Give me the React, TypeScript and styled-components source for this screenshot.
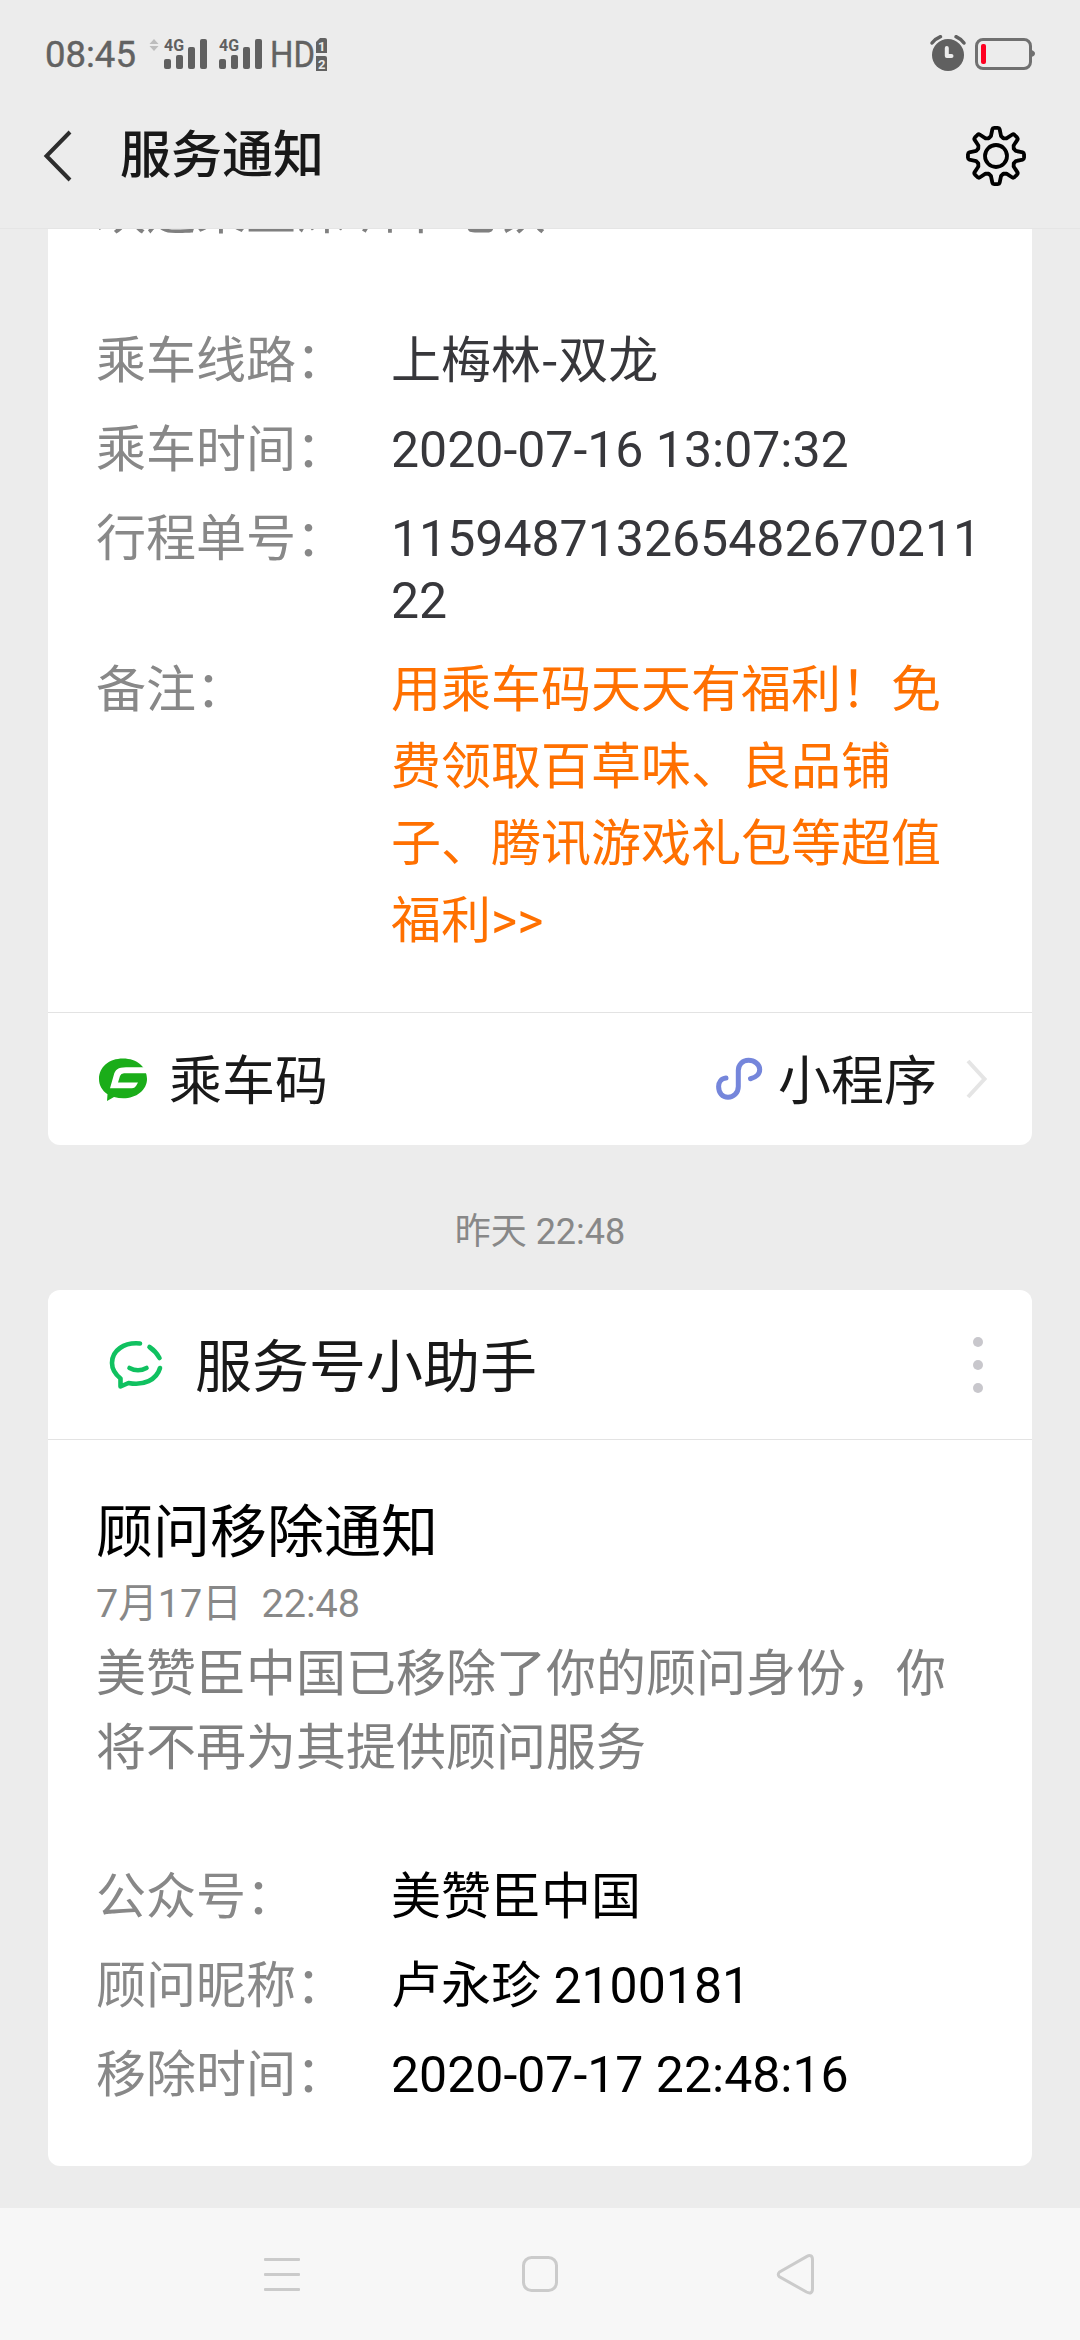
import React from 'react';
import styled, { createGlobalStyle } from 'styled-components';

const Global = createGlobalStyle`
  * { box-sizing: border-box; }
  body {
    margin: 0;
    background: #ececec;
    font-family: Roboto, 'Noto Sans CJK SC', sans-serif;
  }
  svg { display: block; flex: none; overflow: visible; }
`;

const Screen = styled.div`
  width: 1080px;
  height: 2340px;
  display: flex;
  flex-direction: column;
  overflow: hidden;
  background: #ececec;
`;

const Header = styled.header`
  flex: none;
  height: 229px;
  border-bottom: 1px solid #e5e5e5;
`;

const StatusBar = styled.div`
  display: flex;
  justify-content: space-between;
  height: 108px;
  padding: 0 45px;
`;

const StatusGroup = styled.div`
  display: flex;
  align-items: flex-start;
`;

const Clock = styled.span`
  margin-top: 34px;
  width: 103px;
  font-size: 36.5px;
  line-height: 42px;
  -webkit-text-stroke: 0.4px #626262;
  color: #626262;
`;

const StatusIcon = styled.span<{ $gap: number }>`
  display: flex;
  height: 42px;
  margin: 32px 0 0 ${(p) => p.$gap}px;
`;

const TitleBar = styled.div`
  display: flex;
  align-items: center;
  height: 96px;
  padding: 0 53px 0 43px;
`;

const Title = styled.h1`
  flex: 1;
  margin: 0 0 0 47px;
  font-size: 51px;
  line-height: 76px;
  font-weight: 500;
  color: #181818;
`;

const Feed = styled.main`
  flex: 1;
  min-height: 0;
  display: flex;
  flex-direction: column;
  justify-content: flex-end;
  overflow: hidden;
  padding: 0 48px 42px;
`;

const Card = styled.section<{ $cut?: boolean }>`
  flex: none;
  background: #fff;
  border-radius: ${(p) => (p.$cut ? '0 0 12px 12px' : '12px')};
`;

const Body = styled.div<{ $bottom: number; $top: number }>`
  padding: ${(p) => p.$top}px 48px ${(p) => p.$bottom}px;
`;

const Paragraph = styled.p`
  margin: 3px 0 75px;
  font-size: 50px;
  line-height: 74px;
  color: #808080;
`;

const Rows = styled.div`
  display: flex;
  flex-direction: column;
  gap: 15px;
`;

const Row = styled.div<{ $after?: number }>`
  display: flex;
  align-items: flex-start;
  margin-bottom: ${(p) => p.$after ?? 0}px;
`;

const Label = styled.span`
  flex: none;
  width: 295px;
  font-size: 50px;
  line-height: 74px;
  color: #888;
`;

const Value = styled.span<{ $color: string; $line?: number; $shift?: number }>`
  flex: 1;
  margin-top: ${(p) => p.$shift ?? 0}px;
  font-size: 50px;
  line-height: ${(p) => p.$line ?? 74}px;
  word-break: break-all;
  color: ${(p) => p.$color};
`;

const WideHyphen = styled.span`
  font-family: 'Noto Sans CJK SC', sans-serif;
  line-height: 1;
`;

const Footer = styled.div`
  display: flex;
  align-items: center;
  height: 133px;
  padding: 0 42px 0 48px;
  border-top: 1px solid #e3e3e3;
`;

const ServiceName = styled.span`
  flex: 1;
  margin-left: 19px;
  padding-top: 5px;
  font-size: 53px;
  line-height: 78px;
  color: #191919;
`;

const LinkText = styled.span`
  margin: 0 29px 0 15px;
  padding-top: 5px;
  font-size: 53px;
  line-height: 78px;
  color: #191919;
`;

const Timestamp = styled.time`
  flex: none;
  height: 145px;
  padding-top: 60px;
  text-align: center;
  font-size: 36px;
  line-height: 54px;
  color: #888;
`;

const CardHead = styled.div`
  display: flex;
  align-items: center;
  height: 150px;
  padding: 1px 49px 0 58px;
  border-bottom: 1px solid #e3e3e3;
`;

const Account = styled.span`
  flex: 1;
  margin-left: 29px;
  padding-top: 6px;
  font-size: 57px;
  line-height: 84px;
  color: #191919;
`;

const Dots = styled.div`
  display: flex;
  flex-direction: column;
  gap: 13px;
`;

const Dot = styled.i`
  width: 10px;
  height: 10px;
  border-radius: 50%;
  background: #c8c7cc;
`;

const Headline = styled.h2`
  margin: 0;
  font-size: 57px;
  line-height: 83px;
  font-weight: 400;
  color: #000;
`;

const DateLine = styled.div`
  font-size: 39.6px;
  line-height: 60px;
  white-space: pre;
  color: #888;
`;

const NavBar = styled.nav`
  flex: none;
  height: 132px;
  display: flex;
  justify-content: space-between;
  align-items: center;
  padding: 0 262px;
  background: #f7f7f7;
`;

const Signal = () => (
  <svg width="44" height="42" viewBox="0 -6 44 42" fill="#606060">
    <rect x="0" y="21" width="7" height="10" rx="2" />
    <rect x="12" y="17" width="7" height="14" rx="2" />
    <rect x="24" y="9" width="7" height="22" rx="2" />
    <rect x="36" y="1" width="7" height="30" rx="2" />
    <text x="0" y="13" fontSize="17" fontWeight="700" textLength="20" lengthAdjust="spacingAndGlyphs">4G</text>
  </svg>
);

const DataArrows = () => (
  <svg width="10" height="42" viewBox="0 -6 10 42" fill="#bdbdbd">
    <path d="M5 1 9.500 6H.5ZM5 13 9.500 8H.5Z" />
  </svg>
);

const HdSims = () => (
  <svg width="60" height="42" viewBox="0 -6 60 42" fill="#626262">
    <text x="-2" y="29" fontSize="36" stroke="#626262" strokeWidth=".4" textLength="45" lengthAdjust="spacingAndGlyphs">HD</text>
    <path d="M48 0H53Q55 0 55 2V15H44V4Z" />
    <path d="M44 18H53Q55 18 55 20V33H44V22Z" />
    <text x="46" y="12.500" fontSize="13" fontWeight="700" fill="#ececec">1</text>
    <text x="46" y="30.500" fontSize="13" fontWeight="700" fill="#ececec">2</text>
  </svg>
);

const AlarmBattery = () => (
  <svg width="106" height="42" viewBox="0 -6 106 42" fill="none">
    <circle cx="19" cy="17" r="16" fill="#606060" />
    <path d="M17.800 10V18H22.500" stroke="#ececec" strokeWidth="4" strokeLinecap="round" strokeLinejoin="round" />
    <path d="M3 5Q6 1 11.500-1.300M35 5Q32 1 27-1.300" stroke="#606060" strokeWidth="3.500" strokeLinecap="round" />
    <rect x="47.500" y="1.500" width="54" height="29" rx="6.500" stroke="#707070" strokeWidth="3" />
    <path d="M102 12Q106 13 106 15.500T102 19Z" fill="#707070" />
    <rect x="52" y="6" width="5" height="20" rx="2" fill="#ff0021" />
  </svg>
);

function gearPath() {
  const parts: string[] = [];
  for (let i = 0; i < 8; i++) {
    const a = (i * Math.PI) / 4;
    const pt = (r: number, off: number) => {
      const t = a + off;
      return `${(31 + r * Math.sin(t)).toFixed(2)} ${(31 - r * Math.cos(t)).toFixed(2)}`;
    };
    parts.push(`${i ? 'L' : 'M'}${pt(19.2, -Math.PI / 8)}`);
    parts.push(`L${pt(20.5, -0.25)}L${pt(27, -0.135)}Q${pt(28.1, -0.12)} ${pt(28.1, -0.06)}`);
    parts.push(`L${pt(28.1, 0.06)}Q${pt(28.1, 0.12)} ${pt(27, 0.135)}L${pt(20.5, 0.25)}`);
  }
  return parts.join('') + 'Z';
}

export default function App() {
  return (
    <>
      <Global />
      <Screen>
        <Header>
          <StatusBar>
            <StatusGroup>
              <Clock>08:45</Clock>
              <StatusIcon $gap={1}><DataArrows /></StatusIcon>
              <StatusIcon $gap={5}><Signal /></StatusIcon>
              <StatusIcon $gap={11}><Signal /></StatusIcon>
              <StatusIcon $gap={9}><HdSims /></StatusIcon>
            </StatusGroup>
            <StatusGroup>
              <StatusIcon $gap={0}><AlarmBattery /></StatusIcon>
            </StatusGroup>
          </StatusBar>
          <TitleBar>
            <svg width="30" height="52" viewBox="0 0 30 52" fill="none">
              <path d="M27 2 3.500 26 27 50" stroke="#2d2d2d" strokeWidth="4" />
            </svg>
            <Title>服务通知</Title>
            <svg width="62" height="62" viewBox="0 0 62 62" fill="none" stroke="#000" strokeWidth="3.800" strokeLinejoin="round">
              <path d={gearPath()} />
              <circle cx="31" cy="31" r="11" />
            </svg>
          </TitleBar>
        </Header>

        <Feed>
          <Card $cut>
            <Body $top={0} $bottom={52}>
              <Paragraph>欢迎乘坐深圳市地铁</Paragraph>
              <Rows>
                <Row><Label>乘车线路：</Label><Value $color="#37373b">上梅林<WideHyphen>-</WideHyphen>双龙</Value></Row>
                <Row><Label>乘车时间：</Label><Value $color="#37373b">2020-07-16 13:07:32</Value></Row>
                <Row $after={6}><Label>行程单号：</Label><Value $color="#37373b" $line={62} $shift={6}>11594871326548267021122</Value></Row>
                <Row><Label>备注：</Label><Value $color="#ff7000" $line={77} $shift={-1}>用乘车码天天有福利！免费领取百草味、良品铺子、腾讯游戏礼包等超值福利&gt;&gt;</Value></Row>
              </Rows>
            </Body>
            <Footer>
              <svg width="54" height="48" viewBox="0 0 54 48">
                <path d="M27 3.500C13 3.500 3 12 3 24c0 6 3 11.500 8.500 15.300L11 46l7-4c17 5 33-4.500 33-18C51 12 41 3.500 27 3.500Z" fill="#1aad19" />
                <path d="M54 12.300H30C22 12.300 19 15 17.800 20L14 33.200H36Q38.500 33.200 40 31L42 27.500H22L24 21Q25 18.300 28 18.300H54Z" fill="#fff" />
              </svg>
              <ServiceName>乘车码</ServiceName>
              <svg width="48" height="44" viewBox="0 0 48 44" fill="none" stroke="#7586db" strokeWidth="5" strokeLinecap="round">
                <path d="M11 21C6 21.500 3.600 25.500 3.600 29.500C3.600 36 7.500 40.300 13 40.300S23.300 36 23.300 29.500V13.500C23.300 7.500 27.500 3.300 33.500 3.300S44.700 7.500 44.700 12.500C44.700 17 41 20.500 35.500 21.700" />
              </svg>
              <LinkText>小程序</LinkText>
              <svg width="24" height="42" viewBox="0 0 24 42" fill="none">
                <path d="M2 3 18.500 21 2 39" stroke="#e5e5e5" strokeWidth="4" />
              </svg>
            </Footer>
          </Card>

          <Timestamp>昨天 22:48</Timestamp>

          <Card>
            <CardHead>
              <svg width="60" height="56" viewBox="0 0 60 56" fill="none" stroke="#10c160" strokeWidth="4.600" strokeLinecap="round" strokeLinejoin="round">
                <path d="M34 6.500C18 5 6 13.500 6 26c0 6 3 11 8.500 15.500v8l8-3.500c15 3 28-3 31.500-15" />
                <path d="M43.500 10q6.500 4.500 10 11" />
                <path d="M23.500 31q8.500 4.500 17 0" />
              </svg>
              <Account>服务号小助手</Account>
              <Dots><Dot /><Dot /><Dot /></Dots>
            </CardHead>
            <Body $top={51} $bottom={54}>
              <Headline>顾问移除通知</Headline>
              <DateLine>7月17日  22:48</DateLine>
              <Paragraph>美赞臣中国已移除了你的顾问身份，你将不再为其提供顾问服务</Paragraph>
              <Rows>
                <Row><Label>公众号：</Label><Value $color="#000">美赞臣中国</Value></Row>
                <Row><Label>顾问昵称：</Label><Value $color="#000">卢永珍 2100181</Value></Row>
                <Row><Label>移除时间：</Label><Value $color="#000">2020-07-17 22:48:16</Value></Row>
              </Rows>
            </Body>
          </Card>
        </Feed>

        <NavBar>
          <svg width="40" height="46" viewBox="0 0 40 46" fill="#cbcbcb">
            <rect x="2" y="7" width="36" height="3" rx="1" />
            <rect x="2" y="22" width="36" height="3" rx="1" />
            <rect x="2" y="37" width="36" height="3" rx="1" />
          </svg>
          <svg width="40" height="46" viewBox="0 0 40 46" fill="none" stroke="#cbcbcb" strokeWidth="3">
            <rect x="3.500" y="6.500" width="33" height="33" rx="8" />
          </svg>
          <svg width="40" height="46" viewBox="0 0 40 46" fill="none" stroke="#cbcbcb" strokeWidth="3">
            <path d="M1.500 21 28.500 5.600Q34.500 2.500 34.500 9V37.500Q34.500 44 28.500 41L1.500 25.800Q-1 23.400 1.500 21Z" />
          </svg>
        </NavBar>
      </Screen>
    </>
  );
}
